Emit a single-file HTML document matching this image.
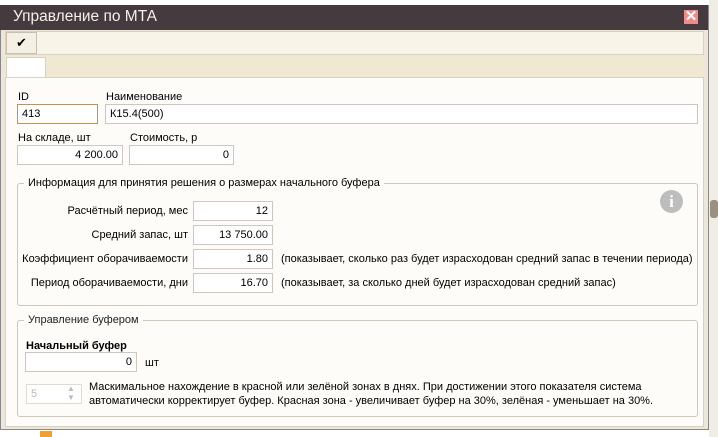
<!DOCTYPE html>
<html><head><meta charset="utf-8"><style>
*{box-sizing:border-box;margin:0;padding:0}
body{width:718px;height:437px;overflow:hidden;background:#fff;font-family:"Liberation Sans",sans-serif;font-size:11px;color:#000;position:relative}
.a{position:absolute}
.in{position:absolute;background:#fff;border:1px solid #cfc6bd;height:20px;padding:2px 4px;text-align:right;font-size:11px;line-height:15px}
.lbl{position:absolute;font-size:11px;white-space:nowrap}
.r{text-align:right}
</style></head><body>
<div class="a" style="left:0;top:0;width:718px;height:6px;background:#fff;border-bottom:1px solid #ddd"></div>
<div class="a" style="left:0;top:429px;width:718px;height:8px;background:#fff;border-top:1px solid #aaa"></div>
<div class="a" style="left:40px;top:431px;width:12px;height:6px;background:#f0a030"></div>
<div class="a" style="left:709px;top:0;width:9px;height:437px;background:#f0ede4"></div>
<div class="a" style="left:710px;top:200px;width:8px;height:18px;background:#9a8f80;border-radius:3px"></div>
<div class="a" style="left:0;top:5px;width:709px;height:425px;background:#ece7d8;border:1px solid #888"></div>
<div class="a" style="left:0;top:5px;width:708px;height:25px;background:#453a3e"></div>
<div class="lbl" style="left:13px;top:8px;font-size:15.5px;color:#f4f0ea">Управление по МТА</div>
<div class="a" style="left:684px;top:10px;width:14px;height:14px;background:#f28a8a;color:#fff;font-weight:bold;font-size:15px;line-height:14px;text-align:center">✕</div>
<div class="a" style="left:5px;top:31px;width:699px;height:24px;background:#f8f5e8;border:1px solid #d8d2c0"></div>
<div class="a" style="left:6px;top:32px;width:31px;height:22px;border:1px solid #c8c0b0;background:#f4f0e4;text-align:center;font-size:13px;line-height:20px">✔</div>
<div class="a" style="left:5px;top:56px;width:699px;height:21px;background:#efe9d2"></div>
<div class="a" style="left:6px;top:57px;width:40px;height:21px;background:#fff;border:1px solid #d8d0c0;border-bottom:none"></div>
<div class="a" style="left:5px;top:77px;width:699px;height:350px;background:#fdfcf9;border:1px solid #d8d0c0"></div>

<div class="lbl" style="left:18px;top:91px">ID</div>
<div class="in" style="left:17px;top:104px;width:81px;border-color:#c8904a;text-align:left">413</div>
<div class="lbl" style="left:106px;top:91px">Наименование</div>
<div class="in" style="left:105px;top:104px;width:593px;text-align:left">К15.4(500)</div>
<div class="lbl" style="left:18px;top:132px">На складе, шт</div>
<div class="in" style="left:17px;top:145px;width:106px">4 200.00</div>
<div class="lbl" style="left:130px;top:132px">Стоимость, р</div>
<div class="in" style="left:129px;top:145px;width:105px">0</div>

<div class="a" style="left:17px;top:183px;width:681px;height:123px;border:1px solid #d0c8bc;border-radius:3px"></div>
<div class="lbl" style="left:24px;top:177px;background:#fdfcf9;padding:0 4px">Информация для принятия решения о размерах начального буфера</div>
<div class="a" style="left:660px;top:190px;width:23px;height:23px;border-radius:50%;background:#bdbdbd;color:#fff;font-weight:bold;font-family:'Liberation Serif',serif;font-size:17px;line-height:23px;text-align:center">i</div>
<div class="lbl r" style="left:20px;width:168px;top:205px">Расчётный период, мес</div>
<div class="in" style="left:193px;top:201px;width:80px">12</div>
<div class="lbl r" style="left:20px;width:168px;top:229px">Средний запас, шт</div>
<div class="in" style="left:193px;top:225px;width:80px">13 750.00</div>
<div class="lbl r" style="left:10px;width:178px;top:253px">Коэффициент оборачиваемости</div>
<div class="in" style="left:193px;top:249px;width:80px">1.80</div>
<div class="lbl" style="left:281px;top:253px">(показывает, сколько раз будет израсходован средний запас в течении периода)</div>
<div class="lbl r" style="left:10px;width:178px;top:277px">Период оборачиваемости, дни</div>
<div class="in" style="left:193px;top:273px;width:80px">16.70</div>
<div class="lbl" style="left:281px;top:277px">(показывает, за сколько дней будет израсходован средний запас)</div>

<div class="a" style="left:17px;top:320px;width:681px;height:97px;border:1px solid #d0c8bc;border-radius:3px"></div>
<div class="lbl" style="left:24px;top:314px;background:#fdfcf9;padding:0 4px;color:#222">Управление буфером</div>
<div class="lbl" style="left:26px;top:340px;font-weight:bold">Начальный буфер</div>
<div class="in" style="left:25px;top:352px;width:112px">0</div>
<div class="lbl" style="left:145px;top:357px">шт</div>
<div class="in" style="left:26px;top:384px;width:56px;text-align:left;color:#bbb;border-color:#e0dcd4">5</div>
<div class="lbl" style="left:67px;top:384px;color:#bbb;font-size:8px;line-height:9px">▲<br>▼</div>
<div class="lbl" style="left:89px;top:380px;line-height:14px">Маскимальное нахождение в красной или зелёной зонах в днях. При достижении этого показателя система<br>автоматически корректирует буфер. Красная зона - увеличивает буфер на 30%, зелёная - уменьшает на 30%.</div>
</body></html>
